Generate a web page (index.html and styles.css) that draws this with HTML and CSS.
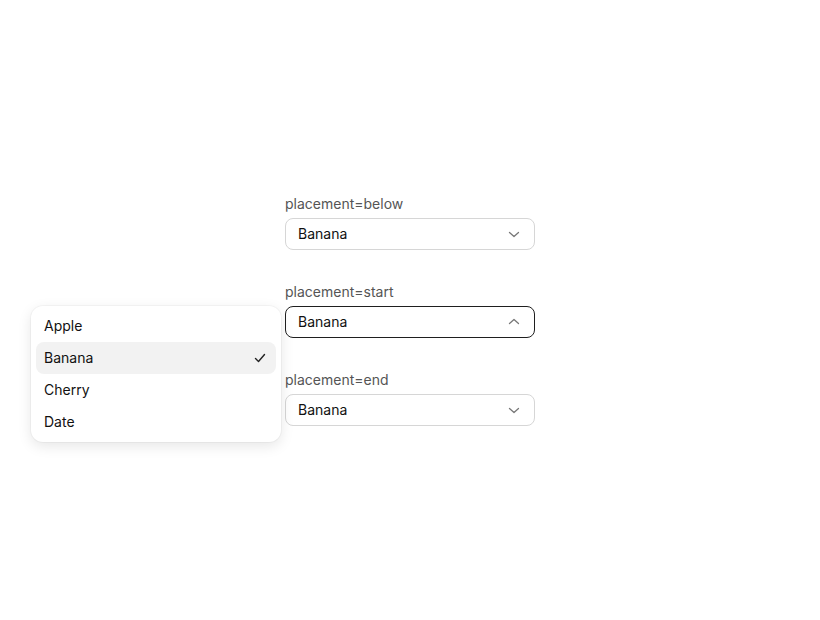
FILE: index.html
```html
<!DOCTYPE html>
<html lang="en">
<head>
  <meta charset="UTF-8" />
  <meta name="viewport" content="width=device-width, initial-scale=1" />
  <title>Select placement</title>
  <link rel="stylesheet" href="styles.css">
</head>
<body>

<div class="stack">
  <div class="field">
    <label class="field-label">placement=below</label>
    <button class="select-trigger">
      <span>Banana</span>
      <svg class="chevron" viewBox="0 0 16 16" width="16" height="16"><path d="M3.5 6.5 8 10.5l4.5-4" /></svg>
    </button>
  </div>

  <div class="field">
    <label class="field-label">placement=start</label>
    <div class="select-wrap">
      <button class="select-trigger open">
        <span>Banana</span>
        <svg class="chevron" viewBox="0 0 16 16" width="16" height="16"><path d="M3.5 9.5 8 5.5l4.5 4" /></svg>
      </button>
      <ul class="menu menu-start" role="listbox">
        <li class="option">Apple</li>
        <li class="option selected">Banana
          <svg class="check" viewBox="0 0 16 16" width="16" height="16"><path d="M3.5 8.5 6.5 11.5 12.5 4.5" /></svg>
        </li>
        <li class="option">Cherry</li>
        <li class="option">Date</li>
      </ul>
    </div>
  </div>

  <div class="field">
    <label class="field-label">placement=end</label>
    <button class="select-trigger">
      <span>Banana</span>
      <svg class="chevron" viewBox="0 0 16 16" width="16" height="16"><path d="M3.5 6.5 8 10.5l4.5-4" /></svg>
    </button>
  </div>
</div>

</body>
</html>
```

FILE: styles.css
```css
* {
  box-sizing: border-box;
}
html, body {
  height: 100%;
}
body {
  margin: 0;
  font-family: Inter, "Liberation Sans", sans-serif;
  font-size: 14px;
  color: #1a1a1a;
  background: #fff;
  display: flex;
  align-items: center;
  justify-content: center;
}

.stack {
  display: flex;
  flex-direction: column;
  gap: 32px;
  width: 250px;
}

.field {
  display: flex;
  flex-direction: column;
  gap: 4px;
}
.field-label {
  line-height: 20px;
  color: #555;
}

.select-wrap {
  position: relative;
}

.select-trigger {
  width: 100%;
  height: 32px;
  display: flex;
  align-items: center;
  justify-content: space-between;
  padding: 0 12px 1px;
  border: 1px solid #d6d6d6;
  border-radius: 8px;
  background: #fff;
  font: inherit;
  color: #111;
  cursor: pointer;
}
.select-trigger.open {
  border-color: #1f1f1f;
}
.chevron {
  fill: none;
  stroke: #777;
  stroke-width: 1.3;
  stroke-linecap: round;
  stroke-linejoin: round;
}

/* popup sits to the left of the trigger, top edges aligned */
.menu {
  position: absolute;
  top: 0;
  right: calc(100% + 4px);
  width: 250px;
  margin: 0;
  padding: 4px 5px;
  list-style: none;
  background: #fff;
  border-radius: 12px;
  box-shadow: 0 0 0 1px rgb(0 0 0 / 0.03), 0 4px 14px rgb(0 0 0 / 0.1);
}
.option {
  height: 32px;
  display: flex;
  align-items: center;
  justify-content: space-between;
  padding: 0 8px 1px;
  border-radius: 8px;
  color: #111;
}
.option.selected {
  background: #f2f2f2;
}
.check {
  fill: none;
  stroke: #222;
  stroke-width: 1.4;
  stroke-linecap: round;
  stroke-linejoin: round;
}
```
